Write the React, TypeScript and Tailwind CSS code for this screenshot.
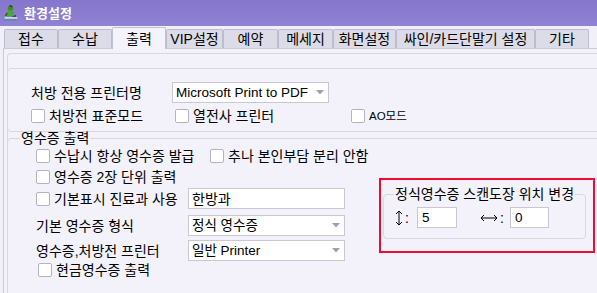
import React from "react";

function Cb({ label, className = "", textClass = "" }: { label: string; className?: string; textClass?: string }) {
  return (
    <div className={"flex items-center shrink-0 " + className}>
      <span className="w-[14px] h-[14px] bg-white border border-[#b4b3c2] rounded-[2px] shrink-0" />
      <span className={"ml-[4px] whitespace-nowrap leading-[14px] " + textClass}>{label}</span>
    </div>
  );
}

function Arrow() {
  return (
    <svg width="8" height="5" viewBox="0 0 8 5" className="shrink-0">
      <path d="M0 0 H8 L4 4.5 Z" fill="#a19db6" />
    </svg>
  );
}

function Select({ value, className = "" }: { value: string; className?: string }) {
  return (
    <div className={"h-[21px] bg-white border border-[#c8c7d2] flex items-center justify-between pl-[3px] pr-[4px] shrink-0 " + className}>
      <span className="text-[13.5px] leading-[16px] whitespace-nowrap">{value}</span>
      <Arrow />
    </div>
  );
}

const tabs = [
  { t: "접수", w: "w-[54px]" },
  { t: "수납", w: "w-[54px]" },
  { t: "출력", w: "w-[54px]", sel: true },
  { t: "VIP설정", w: "w-[57px]" },
  { t: "예약", w: "w-[55px]" },
  { t: "메세지", w: "w-[55px]" },
  { t: "화면설정", w: "w-[63px]" },
  { t: "싸인/카드단말기 설정", w: "w-[139px]" },
  { t: "기타", w: "w-[54px]" },
];

export default function App() {
  return (
    <div className="w-[597px] h-[293px] overflow-hidden bg-[#f1f0f9] text-black text-[14px] font-['Liberation_Sans','Noto_Sans_CJK_KR',sans-serif]">
      {/* Title bar */}
      <div className="h-[26px] flex items-center pl-[2px] bg-gradient-to-b from-[#8576cb] to-[#9082d4]">
        <svg width="18" height="18" viewBox="0 0 17 17" className="shrink-0">
          <path d="M2 14 L15 14 L13 16 L1 16 Z" fill="#6d86b8" />
          <path d="M3 12 L14 12 L15 14 L2 14 Z" fill="#c9d6ec" />
          <circle cx="8" cy="4" r="2.6" fill="#3f8a2a" />
          <path d="M6.5 1.5 Q8 0.5 10 2 L9 3 Z" fill="#1e3d12" />
          <path d="M5 7 Q8 5.5 11 7 L11.5 12 L4.5 12 Z" fill="#4ca53a" />
          <path d="M4.5 8 L2.5 11 L4 11.5 L5.5 9 Z" fill="#2d5f22" />
          <path d="M9 12 L13 10.5 L13.5 12 Z" fill="#2a2a40" />
        </svg>
        <span className="ml-[4px] text-white font-bold text-[13px] leading-[14px] font-['Noto_Sans_CJK_KR',sans-serif]">환경설정</span>
      </div>

      {/* Tabs */}
      <div className="h-[22px] flex items-end pl-[4px]">
        {tabs.map((tb) =>
          tb.sel ? (
            <div
              key={tb.t}
              className={"relative z-10 -mb-px h-[22px] bg-[#f4f3fb] border border-b-0 border-[#c2c1d1] rounded-t-[2px] flex items-center justify-center leading-[14px] " + tb.w}
            >
              {tb.t}
            </div>
          ) : (
            <div
              key={tb.t}
              className={"h-[19px] bg-[#dcdbe8] border border-b-0 border-[#bdbccd] rounded-t-[2px] flex items-center justify-center leading-[14px] whitespace-nowrap " + tb.w}
            >
              {tb.t}
            </div>
          )
        )}
      </div>

      {/* Panel */}
      <div className="ml-[3px] w-[660px] h-[260px] border-l border-t border-[#cac9d7] bg-[#f3f2fa] pl-[3px] pt-[4px]">
        <div className="border-t border-l border-[#d8d7e0] rounded-tl-[4px] pt-[14px]">
          {/* Group 1 */}
          <div className="-ml-px h-[64px] border border-[#d8d7e0] rounded-[4px] pt-[13px] pl-[23px]">
            <div className="flex items-center h-[21px]">
              <span className="w-[141px] shrink-0 leading-[14px]">처방 전용 프린터명</span>
              <Select value="Microsoft Print to PDF" className="w-[157px]" />
            </div>
            <div className="mt-[6px] flex items-center h-[14px]">
              <Cb label="처방전 표준모드" className="w-[144px]" />
              <Cb label="열전사 프린터" className="w-[176px]" />
              <Cb label="AO모드" textClass="text-[11.5px]" />
            </div>
          </div>

          {/* Group 2 */}
          <fieldset className="-ml-px h-[200px] border border-[#d8d7e0] rounded-[4px]">
            <legend className="ml-[12px] leading-[12px] px-[1px]">영수증 출력</legend>
            <div className="pl-[28px] pt-[5px]">
              <div className="flex items-center h-[14px]">
                <Cb label="수납시 항상 영수증 발급" className="w-[174px]" />
                <Cb label="추나 본인부담 분리 안함" />
              </div>
              <div className="mt-[7px] flex items-start">
                <div className="w-[343px] shrink-0">
                  <div className="flex items-center h-[14px]">
                    <Cb label="영수증 2장 단위 출력" />
                  </div>
                  <div className="mt-[4px] flex items-center h-[21px]">
                    <Cb label="기본표시 진료과 사용" className="w-[152px]" />
                    <div className="w-[157px] h-[21px] bg-white border border-[#c8c7d2] flex items-center pl-[3px] leading-[14px]">
                      한방과
                    </div>
                  </div>
                  <div className="mt-[6px] flex items-center h-[21px]">
                    <span className="w-[152px] shrink-0 leading-[14px]">기본 영수증 형식</span>
                    <Select value="정식 영수증" className="w-[157px]" />
                  </div>
                  <div className="mt-[4px] flex items-center h-[21px]">
                    <span className="w-[152px] shrink-0 leading-[14px]">영수증,처방전 프린터</span>
                    <Select value="일반 Printer" className="w-[157px]" />
                  </div>
                  <div className="mt-[2px] ml-[2px] flex items-center h-[14px]">
                    <Cb label="현금영수증 출력" />
                  </div>
                </div>

                {/* Red box */}
                <div className="mt-[8px] w-[216px] h-[75px] shrink-0 border-2 border-[#ee0a30] pt-[7px] pl-[2px]">
                  <fieldset className="w-[203px] border border-[#d8d7e0] rounded-[4px]">
                    <legend className="ml-[10px] leading-[14px] px-[1px] whitespace-nowrap">정식영수증 스캔도장 위치 변경</legend>
                    <div className="pt-[6px] pb-[10px] pl-[11px] flex items-center h-[37px]">
                      <div className="w-[22px] flex items-center shrink-0">
                        <svg width="8" height="16" viewBox="0 0 8 16" className="shrink-0">
                          <path d="M4 1 V15" stroke="#000" strokeWidth="1" />
                          <path d="M1 4 L4 1 L7 4" stroke="#000" strokeWidth="1" fill="none" />
                          <path d="M1 12 L4 15 L7 12" stroke="#000" strokeWidth="1" fill="none" />
                        </svg>
                        <span className="ml-[2px] leading-[14px]">:</span>
                      </div>
                      <div className="w-[40px] h-[21px] bg-white border border-[#c8c7d2] flex items-center pl-[4px] text-[13.5px] leading-[16px] shrink-0">5</div>
                      <div className="ml-[23px] w-[30px] flex items-center shrink-0">
                        <svg width="18" height="8" viewBox="0 0 18 8" className="shrink-0">
                          <path d="M1 4 H17" stroke="#000" strokeWidth="1" />
                          <path d="M4 1 L1 4 L4 7" stroke="#000" strokeWidth="1" fill="none" />
                          <path d="M14 1 L17 4 L14 7" stroke="#000" strokeWidth="1" fill="none" />
                        </svg>
                        <span className="ml-[2px] leading-[14px]">:</span>
                      </div>
                      <div className="w-[39px] h-[21px] bg-white border border-[#c8c7d2] flex items-center pl-[4px] text-[13.5px] leading-[16px] shrink-0">0</div>
                    </div>
                  </fieldset>
                </div>
              </div>
            </div>
          </fieldset>
        </div>
      </div>
    </div>
  );
}
